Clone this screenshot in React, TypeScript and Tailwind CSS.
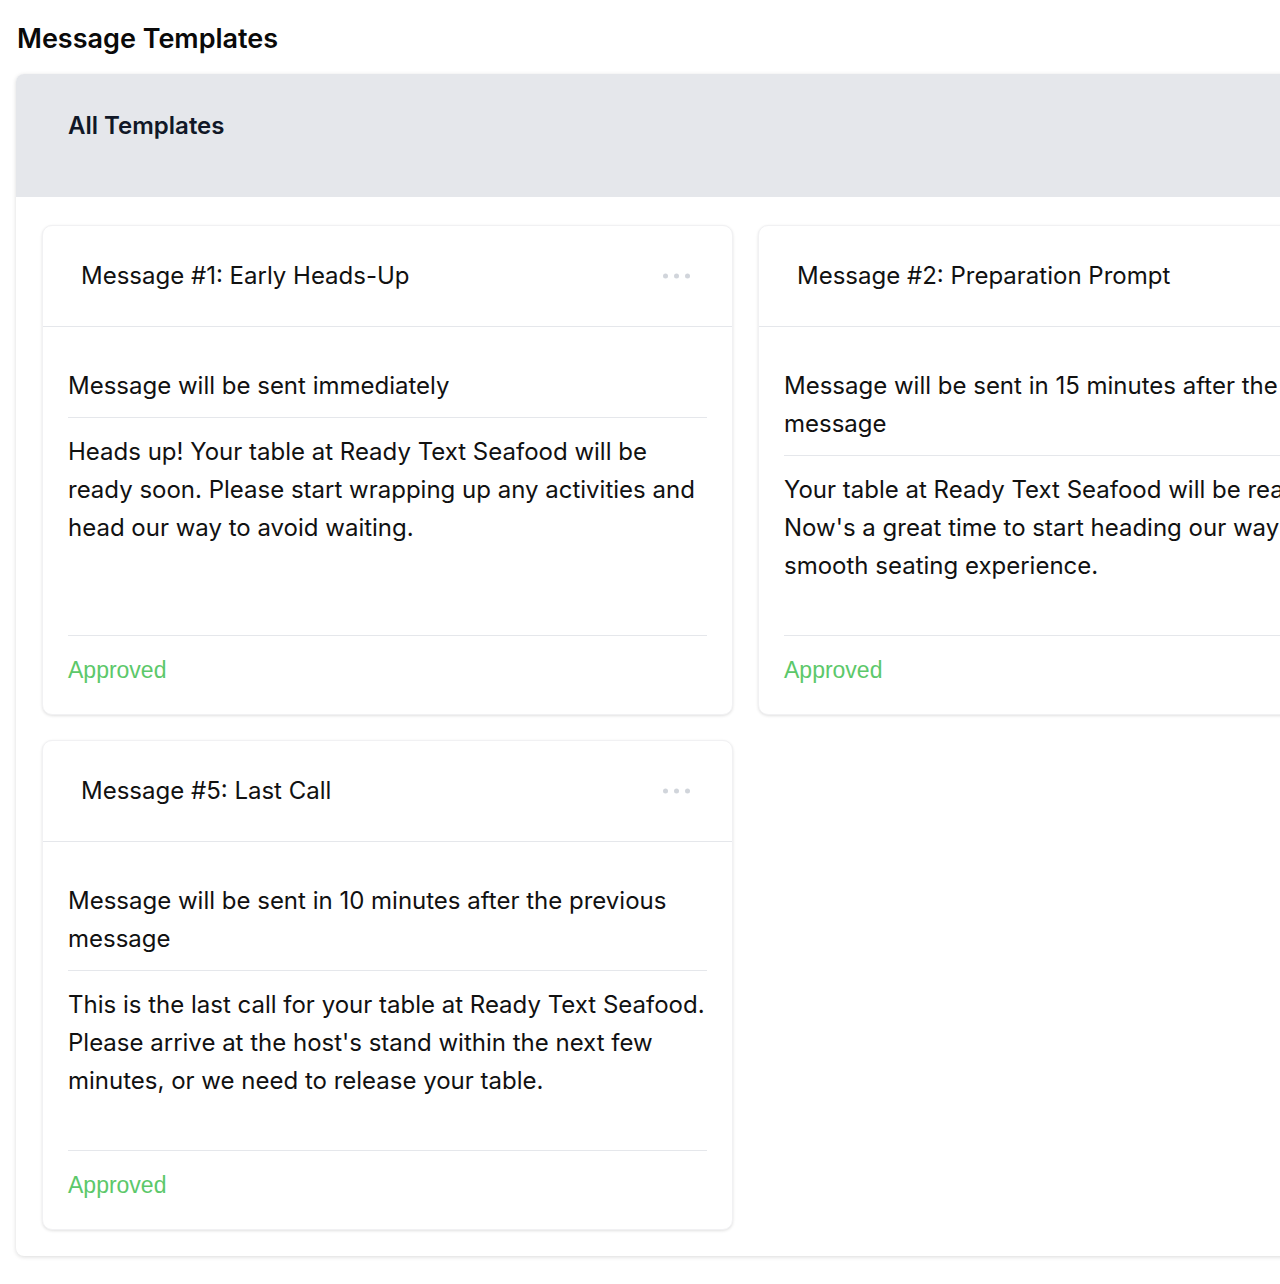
import React from 'react'

interface Template {
  id: number
  title: string
  timing: string
  body: string
  status: string
}

const templates: Template[] = [
  {
    id: 1,
    title: 'Message #1: Early Heads-Up',
    timing: 'Message will be sent immediately',
    body: 'Heads up! Your table at Ready Text Seafood will be ready soon. Please start wrapping up any activities and head our way to avoid waiting.',
    status: 'Approved',
  },
  {
    id: 2,
    title: 'Message #2: Preparation Prompt',
    timing: 'Message will be sent in 15 minutes after the previous message',
    body: "Your table at Ready Text Seafood will be ready shortly. Now's a great time to start heading our way for a smooth seating experience.",
    status: 'Approved',
  },
  {
    id: 3,
    title: 'Message #3: Table Ready',
    timing: 'Message will be sent in 5 minutes after the previous message',
    body: 'Good news! Your table at Ready Text Seafood is ready. Please check in at the host stand.',
    status: 'Approved',
  },
  {
    id: 4,
    title: 'Message #4: Friendly Reminder',
    timing: 'Message will be sent in 5 minutes after the previous message',
    body: 'Just a reminder that your table at Ready Text Seafood is waiting for you.',
    status: 'Approved',
  },
  {
    id: 5,
    title: 'Message #5: Last Call',
    timing: 'Message will be sent in 10 minutes after the previous message',
    body: "This is the last call for your table at Ready Text Seafood. Please arrive at the host's stand within the next few minutes, or we need to release your table.",
    status: 'Approved',
  },
]

function Dots() {
  return (
    <svg width="27" height="6" viewBox="0 0 27 6" className="shrink-0">
      <circle cx="2.5" cy="3" r="2.5" fill="#d1d5db" />
      <circle cx="13.5" cy="3" r="2.5" fill="#d1d5db" />
      <circle cx="24.5" cy="3" r="2.5" fill="#d1d5db" />
    </svg>
  )
}

function TemplateCard({ t }: { t: Template }) {
  return (
    <div className="flex flex-col rounded-[10px] border border-[#f1f1f3] bg-white shadow-[0_1px_3px_rgba(0,0,0,0.12)]">
      <div className="flex h-[101px] items-center justify-between border-b border-[#e5e7eb] pl-[38px] pr-[42px]">
        <span className="text-[24px] text-[#111]">{t.title}</span>
        <Dots />
      </div>
      <div className="flex flex-1 flex-col px-[25px] text-[24px] text-[#111]">
        <div className="border-b border-[#e5e7eb] pt-[40px] pb-[12px] leading-[38px]">{t.timing}</div>
        <div className="flex-1 pt-[15px] pb-[50px] leading-[38px]">{t.body}</div>
        <div className="border-t border-[#e5e7eb] pt-[19px] pb-[29px] font-['Liberation_Sans',Arial,sans-serif] text-[23px] leading-[30px] text-[#5cc86a]">
          {t.status}
        </div>
      </div>
    </div>
  )
}

export default function App() {
  return (
    <div className="min-h-screen w-full overflow-hidden bg-white font-['Inter',sans-serif]">
      <div className="pl-4 pb-[30px]">
        <h1 className="flex h-[74px] items-center pl-px pt-[4px] text-[27px] font-semibold text-[#0a0a0a]">
          Message Templates
        </h1>
        <div className="w-[2920px] rounded-lg bg-white shadow-[0_1px_4px_rgba(0,0,0,0.15)]">
          <div className="h-[123px] rounded-t-lg bg-[#e5e7eb] pl-[52px] pt-[39px]">
            <h2 className="text-[24px] font-semibold leading-[26px] text-[#111827]">All Templates</h2>
          </div>
          <div className="grid grid-cols-[repeat(4,691px)] gap-x-[25px] gap-y-[25px] px-[26px] pt-[28px] pb-[26px]">
            {templates.map(t => (
              <TemplateCard key={t.id} t={t} />
            ))}
          </div>
        </div>
      </div>
    </div>
  )
}
